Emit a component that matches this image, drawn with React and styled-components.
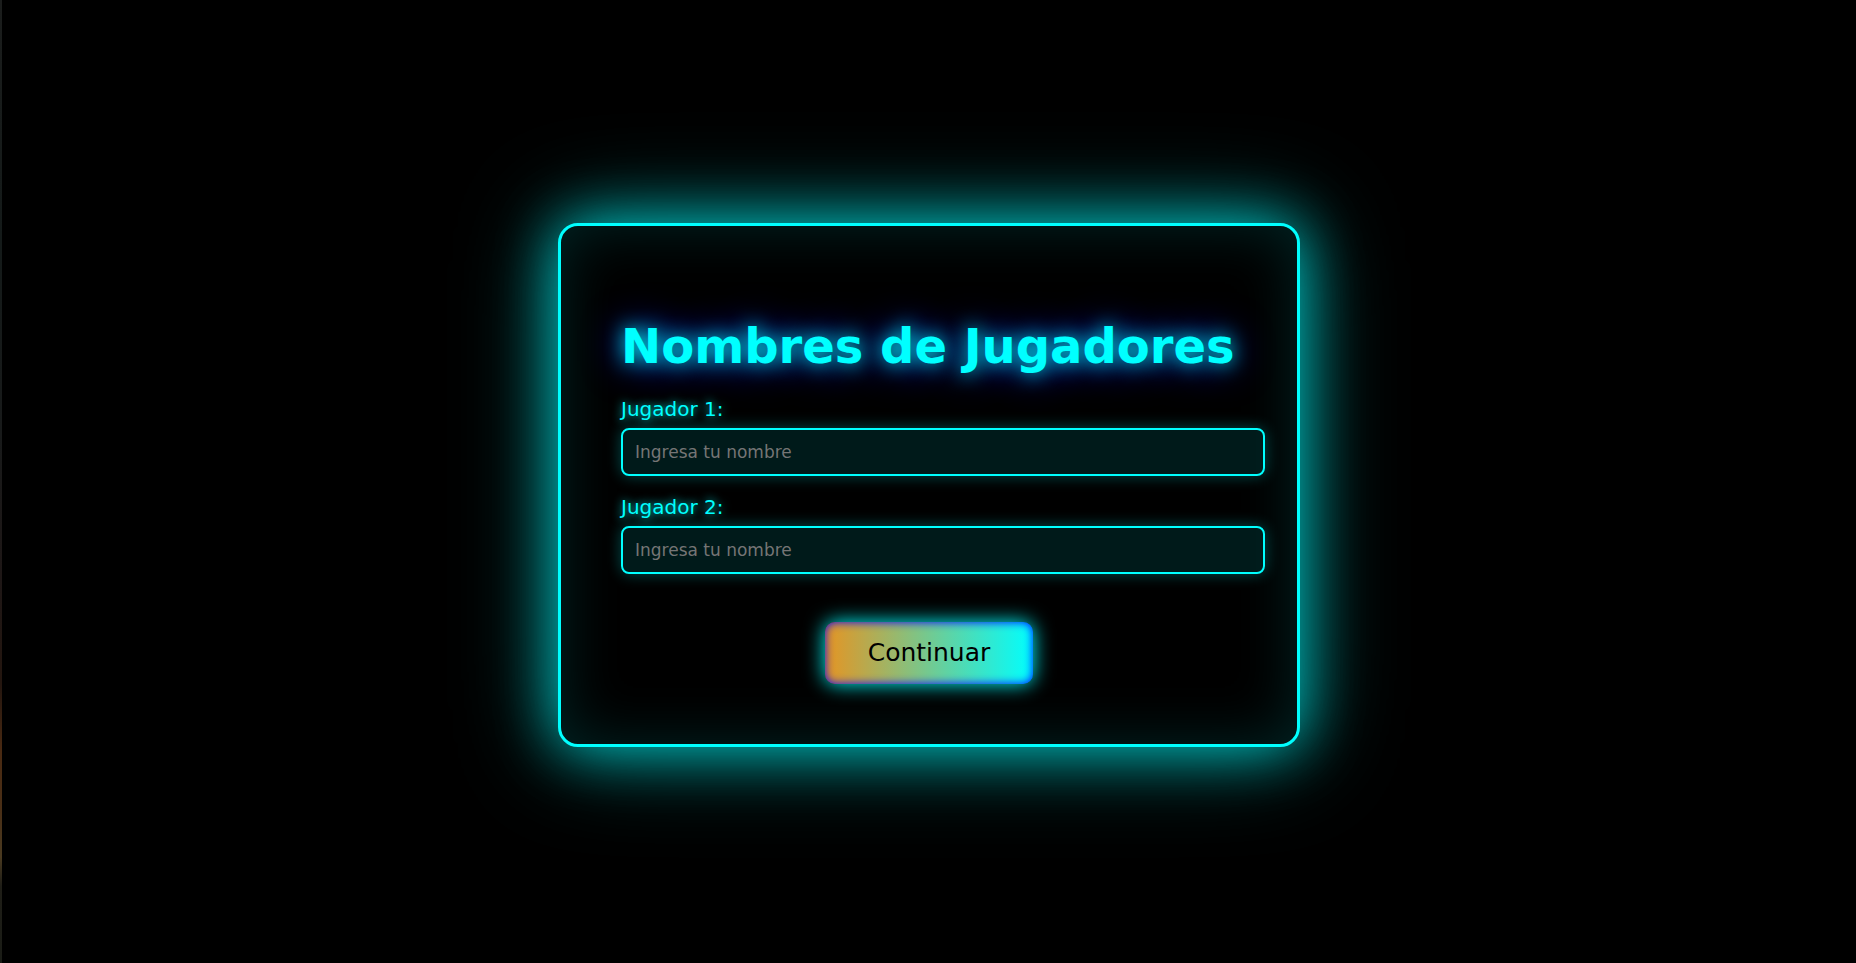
import React from "react";
import styled, { createGlobalStyle } from "styled-components";

const GlobalStyle = createGlobalStyle`
  body {
    margin: 0;
    background: #000;
    color: #0ff;
    font-family: "DejaVu Sans", "Liberation Sans", sans-serif;
  }
`;

const Screen = styled.div`
  display: flex;
  min-height: 100vh;
`;

const EdgeStrip = styled.div`
  flex: 0 0 2px;
  background: linear-gradient(
    #1b1d1c 0%,
    #141a19 25%,
    #181a1a 45%,
    #1e1716 60%,
    #24160f 71%,
    #4a2a12 78%,
    #4a2f16 84%,
    #4a3a20 89%,
    #1f1e17 92%,
    #1a1c16 100%
  );
`;

const Stage = styled.main`
  flex: 1;
  display: flex;
  align-items: center;
  justify-content: center;
  padding-top: 6px;
`;

const Card = styled.section`
  box-sizing: border-box;
  width: 100%;
  max-width: 742px;
  padding: 60px;
  border: 3px solid #0ff;
  border-radius: 20px;
  background: #000;
  box-shadow:
    0 0 60px rgba(0, 255, 255, 0.7),
    0 0 100px rgba(0, 255, 255, 0.4),
    inset 0 0 60px rgba(0, 255, 255, 0.15);
`;

const Title = styled.h1`
  margin: 30px 0 22px;
  font-size: 48px;
  line-height: 60px;
  font-weight: 700;
  white-space: nowrap;
  text-shadow:
    0 0 20px #0ff,
    0 0 40px #00f;
`;

const Form = styled.form`
  display: flex;
  flex-direction: column;
  gap: 20px;
`;

const Field = styled.div`
  display: flex;
  flex-direction: column;
  gap: 8px;
`;

const Label = styled.label`
  font-size: 20px;
  line-height: 22px;
  text-shadow: 0 0 10px #0ff;
`;

const Input = styled.input`
  box-sizing: content-box;
  width: 100%;
  height: 20px;
  padding: 12px;
  border: 2px solid #0ff;
  border-radius: 8px;
  background: rgba(0, 255, 255, 0.1);
  color: #0ff;
  font-family: inherit;
  font-size: 17px;
  box-shadow: 0 0 15px rgba(0, 255, 255, 0.3);

  &::placeholder {
    color: #757575;
  }
`;

const Button = styled.button`
  align-self: center;
  margin-top: 28px;
  padding: 16px 43px;
  border: 0;
  border-radius: 10px;
  background: linear-gradient(90deg, #e69422, #0ff);
  color: #000;
  font-family: inherit;
  font-size: 25px;
  line-height: 30px;
  box-shadow:
    0 0 20px #0ff,
    inset 0 0 10px #00f;
  cursor: pointer;
`;

const players = [1, 2];

export default function App() {
  return (
    <>
      <GlobalStyle />
      <Screen>
        <EdgeStrip />
        <Stage>
          <Card>
            <Title>Nombres de Jugadores</Title>
            <Form onSubmit={(event) => event.preventDefault()}>
              {players.map((n) => (
                <Field key={n}>
                  <Label htmlFor={`player-${n}`}>Jugador {n}:</Label>
                  <Input
                    id={`player-${n}`}
                    type="text"
                    placeholder="Ingresa tu nombre"
                  />
                </Field>
              ))}
              <Button type="submit">Continuar</Button>
            </Form>
          </Card>
        </Stage>
      </Screen>
    </>
  );
}
